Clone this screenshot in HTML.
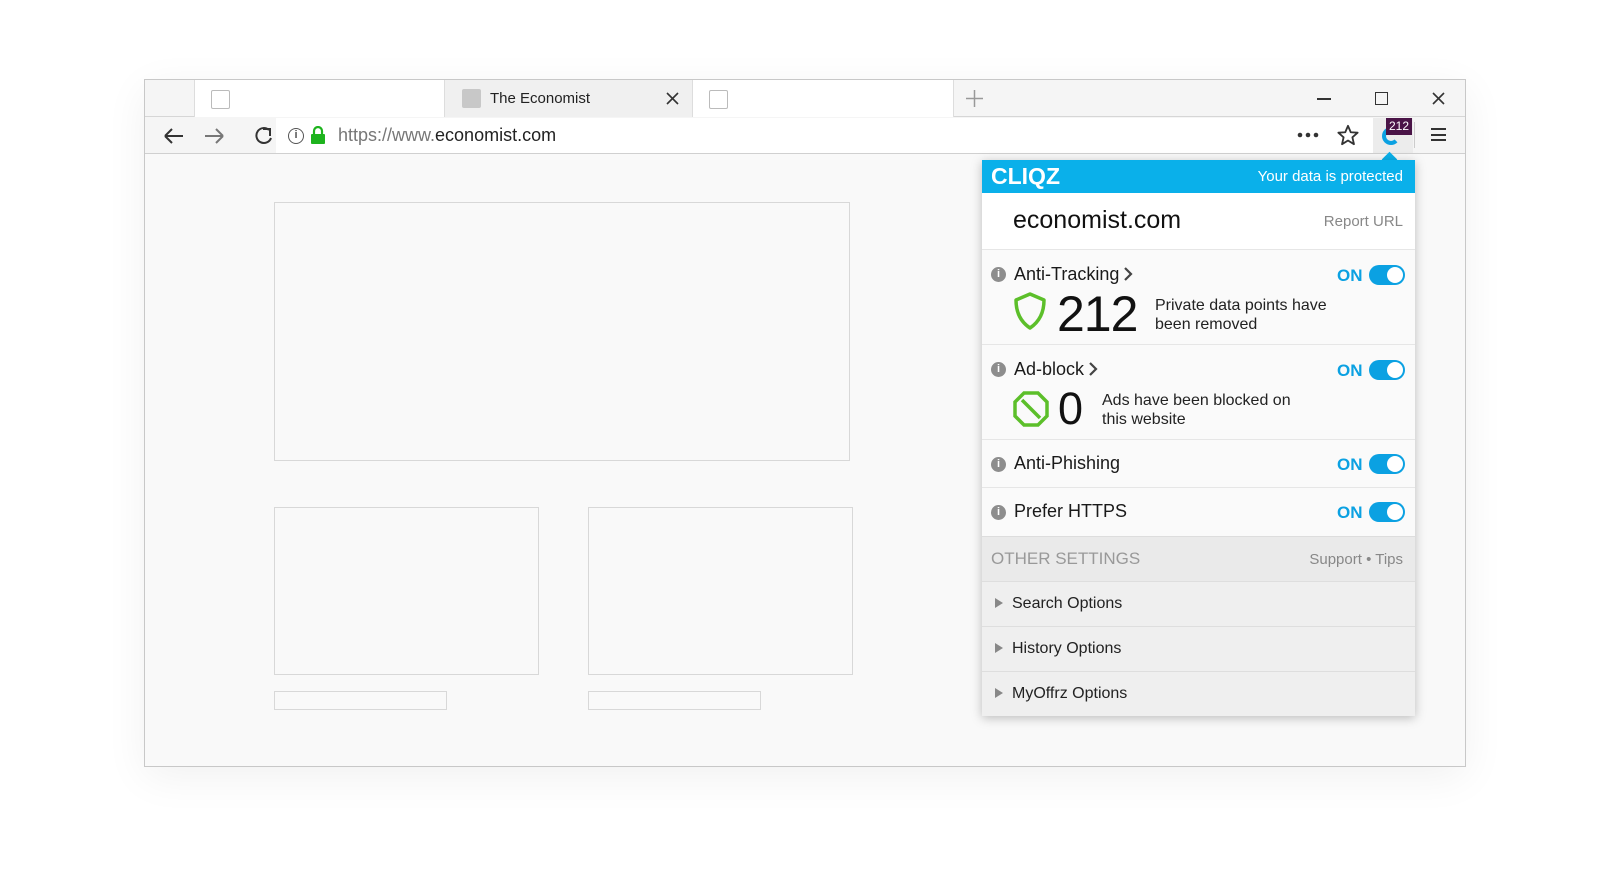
<!DOCTYPE html>
<html><head><style>
*{box-sizing:border-box;margin:0;padding:0}
body{width:1600px;height:887px;background:#fff;font-family:"Liberation Sans",sans-serif;position:relative;overflow:hidden}
.a{position:absolute}
.win{left:144px;top:79px;width:1322px;height:688px;border:1px solid #c8c8c8;background:#f9f9f9;box-shadow:0 10px 40px rgba(0,0,0,.06)}
.box{border:1.5px solid #d8d8d8;background:#f9f9f9}
.pop{left:982px;top:160px;width:433px;height:556px;background:#fafafa;box-shadow:0 2px 10px rgba(0,0,0,.25)}
.row{position:absolute;left:0;width:433px;border-top:1px solid #e6e6e6}
.info{position:absolute;left:9px;width:15px;height:15px;border-radius:50%;background:#8d8d8d;color:#fff;font-size:11px;font-weight:bold;text-align:center;line-height:15px}
.lbl{position:absolute;left:32px;font-size:18px;color:#1a1a1a}
.lbl svg{vertical-align:-1px;margin-left:4px}
.on{position:absolute;left:355px;font-size:17px;font-weight:bold;color:#0ba1e2}
.tg{position:absolute;left:387px;width:36px;height:20px;border-radius:10px;background:#0ba1e2}
.tg:after{content:"";position:absolute;right:2px;top:2px;width:16px;height:16px;border-radius:50%;background:#fff}
.opt{position:absolute;left:0;width:433px;height:45px;border-top:1px solid #dedede;background:#efefef;font-size:16px;color:#222}
.opt span{position:absolute;left:30px;top:13px}
.opt i{position:absolute;left:13px;top:16px;border-left:8px solid #888;border-top:5px solid transparent;border-bottom:5px solid transparent}
</style></head><body>
<div class="a win">
 <div class="a" style="left:0;top:0;width:1320px;height:37px;background:#f5f5f5;border-bottom:1px solid #d6d6d6"></div>
 <div class="a" style="left:49px;top:0;width:250px;height:37px;border-left:1px solid #ddd;background:#fff"></div>
 <div class="a" style="left:66px;top:10px;width:19px;height:19px;border:1.5px solid #bbb;border-radius:2px;background:#fff"></div>
 <div class="a" style="left:299px;top:0;width:249px;height:37px;border-left:1px solid #ddd;border-right:1px solid #ddd;background:#f0f0f0"></div>
 <div class="a" style="left:317px;top:9px;width:19px;height:19px;background:#c8c8c8;border-radius:2px"></div>
 <div class="a" style="left:345px;top:10px;font-size:15px;color:#222">The Economist</div>
 <svg class="a" style="left:521px;top:12px" width="13" height="13"><path d="M1 1L12 12M12 1L1 12" stroke="#333" stroke-width="1.6"/></svg>
 <div class="a" style="left:548px;top:0;width:261px;height:37px;border-right:1px solid #ddd;background:#fff"></div>
 <div class="a" style="left:564px;top:10px;width:19px;height:19px;border:1.5px solid #bbb;border-radius:2px"></div>
 <svg class="a" style="left:821px;top:10px" width="17" height="17"><path d="M8.5 0V17M0 8.5H17" stroke="#999" stroke-width="1.5"/></svg>
 <div class="a" style="left:1172px;top:18px;width:14px;height:1.5px;background:#333"></div>
 <div class="a" style="left:1230px;top:12px;width:13px;height:13px;border:1.5px solid #333"></div>
 <svg class="a" style="left:1287px;top:12px" width="13" height="13"><path d="M1 1L12 12M12 1L1 12" stroke="#333" stroke-width="1.6"/></svg>
 <div class="a" style="left:0;top:37px;width:1320px;height:37px;background:#f5f5f5;border-bottom:1px solid #d0d0d0"></div>
 <svg class="a" style="left:18px;top:46px" width="120" height="20" viewBox="0 0 120 20" fill="none" stroke="#333" stroke-width="2">
  <path d="M2 10H20M2 10L9 3M2 10L9 17"/>
  <path d="M42 10H60M60 10L53 3M60 10L53 17" stroke="#777"/>
  <path d="M106 4A7.5 7.5 0 1 0 108 12"/><path d="M100 3H107V10"/>
 </svg>
 <div class="a" style="left:131px;top:38px;width:1097px;height:35px;background:#fff"></div>
 <div class="a" style="left:1228px;top:38px;width:40px;height:35px;background:#ececec"></div>
 <div class="a" style="left:143px;top:48px;width:16px;height:16px;border:1.5px solid #555;border-radius:50%;font-size:11px;text-align:center;line-height:13px;color:#555;font-weight:bold">i</div>
 <svg class="a" style="left:165px;top:46px" width="16" height="19"><path d="M4 8V5a4 4 0 0 1 8 0v3" stroke="#1db31d" stroke-width="2.2" fill="none"/><rect x="1" y="8" width="14" height="10" rx="1" fill="#1db31d"/></svg>
 <div class="a" style="left:193px;top:45px;font-size:18px;color:#777">https://www.<span style="color:#222">economist.com</span></div>
 <svg class="a" style="left:1152px;top:52px" width="22" height="6"><circle cx="3" cy="3" r="2.3" fill="#333"/><circle cx="11" cy="3" r="2.3" fill="#333"/><circle cx="19" cy="3" r="2.3" fill="#333"/></svg>
 <svg class="a" style="left:1192px;top:44px" width="22" height="22" viewBox="0 0 24 24"><path d="M12 2L15 9L22.5 9.5L16.8 14.5L18.5 22L12 18L5.5 22L7.2 14.5L1.5 9.5L9 9Z" fill="none" stroke="#333" stroke-width="2" stroke-linejoin="round"/></svg>
 <div class="a" style="left:1237px;top:47px;width:18px;height:18px;border:4px solid #0ba1e2;border-radius:50%;border-right-color:transparent"></div>
 <div class="a" style="left:1241px;top:38px;width:26px;height:17px;background:#4a1447;color:#fff;font-size:12px;text-align:center;line-height:17px">212</div>
 <div class="a" style="left:1269px;top:42px;width:1px;height:26px;background:#ccc"></div>
 <div class="a" style="left:1286px;top:48px;width:15px;height:13px;border-top:2px solid #333;border-bottom:2px solid #333"><div style="margin-top:3.5px;height:2px;background:#333"></div></div>
 <div class="a box" style="left:129px;top:122px;width:576px;height:259px"></div>
 <div class="a box" style="left:129px;top:427px;width:265px;height:168px"></div>
 <div class="a box" style="left:443px;top:427px;width:265px;height:168px"></div>
 <div class="a box" style="left:129px;top:611px;width:173px;height:19px"></div>
 <div class="a box" style="left:443px;top:611px;width:173px;height:19px"></div>
</div>
<div class="a" style="left:1384px;top:154px;width:11px;height:11px;background:#0ab0ea;transform:rotate(45deg)"></div>
<div class="a pop">
 <div class="a" style="left:0;top:0;width:433px;height:33px;background:#0ab0ea"></div>
 <div class="a" style="left:9px;top:3px;font-size:23px;font-weight:bold;color:#fff">CLIQZ</div>
 <div class="a" style="right:12px;top:8px;font-size:15px;color:#fff">Your data is protected</div>
 <div class="a" style="left:0;top:33px;width:433px;height:56px;background:#fff"></div>
 <div class="a" style="left:31px;top:46px;font-size:25px;color:#111">economist.com</div>
 <div class="a" style="right:12px;top:53px;font-size:15px;color:#888">Report URL</div>
 <div class="row" style="top:89px;height:95px">
  <div class="info" style="top:17px">i</div><div class="lbl" style="top:14px">Anti-Tracking<svg width="10" height="14"><path d="M2 1L8 7L2 13" fill="none" stroke="#444" stroke-width="2.2"/></svg></div>
  <div class="on" style="top:16px">ON</div><div class="tg" style="top:15px"></div>
  <svg class="a" style="left:31px;top:41px" width="34" height="40"><path d="M17 3L31 9C31 22 26 31 17 37C8 31 3 22 3 9Z" fill="none" stroke="#5cbf2a" stroke-width="3.5" stroke-linejoin="round"/></svg>
  <div class="a" style="left:75px;top:35px;font-size:50px;color:#111;letter-spacing:-1px">212</div>
  <div class="a" style="left:173px;top:46px;font-size:16px;color:#222;line-height:19px">Private data points have<br>been removed</div>
 </div>
 <div class="row" style="top:184px;height:95px">
  <div class="info" style="top:17px">i</div><div class="lbl" style="top:14px">Ad-block<svg width="10" height="14"><path d="M2 1L8 7L2 13" fill="none" stroke="#444" stroke-width="2.2"/></svg></div>
  <div class="on" style="top:16px">ON</div><div class="tg" style="top:15px"></div>
  <svg class="a" style="left:31px;top:46px" width="36" height="36"><polygon points="11,2 25,2 34,11 34,25 25,34 11,34 2,25 2,11" fill="none" stroke="#5cbf2a" stroke-width="3.5"/><path d="M9 9L27 27" stroke="#5cbf2a" stroke-width="3.5"/></svg>
  <div class="a" style="left:76px;top:38px;font-size:45px;color:#111">0</div>
  <div class="a" style="left:120px;top:46px;font-size:16px;color:#222;line-height:19px">Ads have been blocked on<br>this website</div>
 </div>
 <div class="row" style="top:279px;height:48px">
  <div class="info" style="top:17px">i</div><div class="lbl" style="top:13px">Anti-Phishing</div>
  <div class="on" style="top:15px">ON</div><div class="tg" style="top:14px"></div>
 </div>
 <div class="row" style="top:327px;height:49px">
  <div class="info" style="top:17px">i</div><div class="lbl" style="top:13px">Prefer HTTPS</div>
  <div class="on" style="top:15px">ON</div><div class="tg" style="top:14px"></div>
 </div>
 <div class="a" style="left:0;top:376px;width:433px;height:45px;background:#eaeaea;border-top:1px solid #ddd"></div>
 <div class="a" style="left:9px;top:389px;font-size:17px;color:#999">OTHER SETTINGS</div>
 <div class="a" style="right:12px;top:391px;font-size:15px;color:#888">Support • Tips</div>
 <div class="opt" style="top:421px"><i></i><span>Search Options</span></div>
 <div class="opt" style="top:466px"><i></i><span>History Options</span></div>
 <div class="opt" style="top:511px"><i></i><span>MyOffrz Options</span></div>
</div>
</body></html>
